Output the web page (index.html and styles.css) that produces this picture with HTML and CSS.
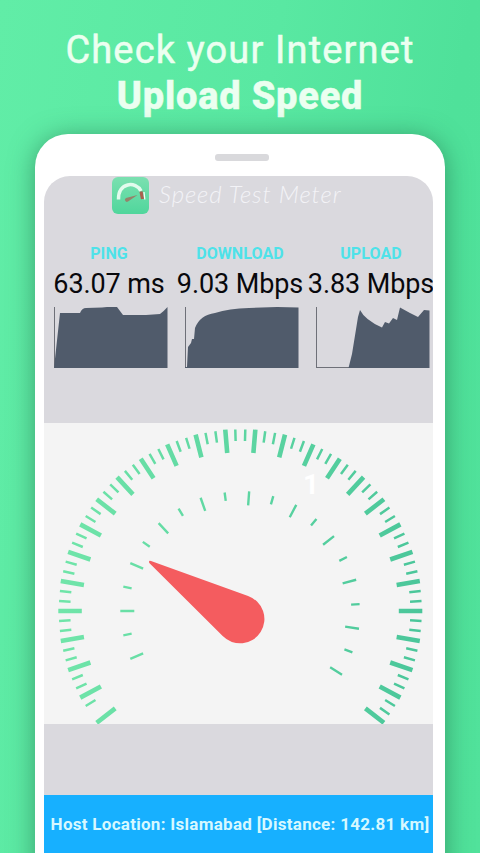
FILE: index.html
```html
<!DOCTYPE html>
<html lang="en">
<head>
<meta charset="utf-8">
<title>Speed Test Meter</title>
<link rel="stylesheet" href="styles.css">
</head>
<body>
<main class="poster">
  <h1 class="headline"><span class="headline-top">Check your Internet</span><strong class="headline-bottom">Upload Speed</strong></h1>
  <div class="phone">
    <div class="speaker"></div>
    <div class="screen">
      <header class="brand">
        <svg class="brand-icon" viewBox="0 0 37 37" width="37" height="37">
          <defs><linearGradient id="tile" x1="0" y1="0" x2="0" y2="1"><stop offset="0" stop-color="#7be0b0"/><stop offset="1" stop-color="#50d69c"/></linearGradient></defs>
          <rect width="37" height="37" rx="6" fill="url(#tile)"/>
          <path d="M6.500 22.500C6 5 24 4 29 14" fill="none" stroke="#e2fbed" stroke-width="3.500"/>
          <path d="M29 14.500L30.500 22" stroke="#a9604f" stroke-width="3.200"/>
          <path d="M32 15L32.800 22.500" stroke="#f3fff8" stroke-width="1.300"/>
          <path d="M25.500 18L14 21a2 2 0 0 0 2 3.600z" fill="#95836b"/>
        </svg>
        <span class="brand-name">Speed Test Meter</span>
      </header>
      <section class="stats">
        <div class="stat">
          <span class="label">PING</span><span class="value">63.07 ms</span>
          <svg class="chart" viewBox="0 0 116 64" width="116" height="64"><path class="axis" d="M2.500 3V64"/><path class="area" d="M2 64L8 9H28Q30 4 34 4L50 3.500L55 3H65L71 11L94 11L108 10Q112 7 115.500 3V64Z"/></svg>
        </div>
        <div class="stat">
          <span class="label">DOWNLOAD</span><span class="value">9.03 Mbps</span>
          <svg class="chart" viewBox="0 0 116 64" width="116" height="64"><path class="axis" d="M2.500 3V64"/><path class="area" d="M2 64V63H4L5 43L8 39L9 35H11L12 24Q17 11 32 9Q46 4.500 66 4L94 3L115.500 3.500V64Z"/></svg>
        </div>
        <div class="stat">
          <span class="label">UPLOAD</span><span class="value">3.83 Mbps</span>
          <svg class="chart" viewBox="0 0 116 64" width="116" height="64"><path class="axis" d="M2.500 3V64M2 63.500H36"/><path class="area" d="M34.500 64L38 50L44 13L46 6Q51 16 68 23.500L71 18L75 19.500L79 14L83 16L86 3.500L96 9L104 13L110 6L115.500 6.500V64Z"/></svg>
        </div>
      </section>
      <section class="gauge">
        <svg id="dial" viewBox="44 423 389 301" width="389" height="301">
          <defs><linearGradient id="green" gradientUnits="userSpaceOnUse" x1="60" y1="0" x2="422" y2="0"><stop offset="0" stop-color="#70e5a9"/><stop offset="1" stop-color="#4ac69a"/></linearGradient></defs>
          <path id="major" stroke="url(#green)" stroke-width="4.600"/>
          <path id="minor" stroke="url(#green)" stroke-width="2.500"/>
          <path id="inner" stroke="url(#green)" stroke-width="2.400"/>
          <text class="mark" x="303" y="494">1</text>
          <path d="M151 561L248.100 596.100A24.300 24.300 0 1 1 222.700 636L149.300 563Q148.300 560 151 561Z" fill="#f45c5f"/>
        </svg>
      </section>
      <div class="spacer"></div>
      <footer class="host">Host Location: Islamabad [Distance: 142.81 km]</footer>
    </div>
  </div>
</main>
<script src="gauge.js"></script>
</body>
</html>
```
FILE: styles.css
```css
* { box-sizing: border-box; }
body { margin: 0; font-family: Roboto, "Liberation Sans", sans-serif; }
.poster {
  width: 480px; height: 853px; overflow: hidden;
  display: flex; flex-direction: column; align-items: flex-start;
  background: linear-gradient(100deg, #61eda7 0%, #59e8a2 45%, #4fe19a 75%, #51e29b 100%);
}
.headline {
  margin: 0; width: 480px; height: 134px; flex: none; padding-top: 27px;
  display: flex; flex-direction: column; align-items: center;
  color: #ebfff0; font-size: 38px; line-height: 46px; font-weight: 400; white-space: nowrap;
}
.headline-top { letter-spacing: 1.15px; -webkit-text-stroke: .5px #ebfff0; }
.headline-bottom { font-weight: 800; letter-spacing: 0.8px; -webkit-text-stroke: .5px #ebfff0; }
.phone {
  width: 410px; height: 760px; flex: none; margin-left: 35px; padding: 20px 12px 0 9px;
  background: #fff; border-radius: 33px 33px 0 0; box-shadow: 0 3px 26px rgba(32, 105, 70, .58);
}
.speaker { width: 54px; height: 7px; margin: 0 0 15px 171px; background: #d9d9dc; border-radius: 3px; }
.screen {
  width: 389px; height: 740px; overflow: hidden;
  display: flex; flex-direction: column;
  background: #dad9de; border-radius: 26px 26px 0 0;
}
.brand { height: 67px; flex: none; padding: 1px 0 0 68px; display: flex; align-items: flex-start; gap: 10px; }
.brand-name { font: italic 300 24px/34px Lato, sans-serif; letter-spacing: .95px; color: #f3f3f7; white-space: nowrap; }
.stats { height: 180px; flex: none; padding-left: 7px; display: grid; grid-template-columns: 131px 131px 131px; }
.stat { width: 116px; display: flex; flex-direction: column; align-items: center; white-space: nowrap; }
.label { font-size: 16px; line-height: 22px; font-weight: 700; letter-spacing: .1px; color: #4ee2e9; }
.value { font-size: 27px; line-height: 38px; letter-spacing: -.1px; color: #08080c; }
.chart { margin: 1px -1px 0 1px; }
.area { fill: #505b6b; }
.axis { fill: none; stroke: #6e7078; stroke-width: 1; }
.gauge { height: 301px; flex: none; background: #f4f4f4; }
.gauge svg, .chart, .brand-icon { display: block; flex: none; }
.mark { fill: #fff; font: 700 28px Roboto, sans-serif; }
.spacer { height: 71px; flex: none; }
.host {
  height: 58px; flex: none; display: flex; align-items: center; justify-content: center;
  background: #17b0ff; color: #d6f8ff; font-size: 17px; font-weight: 700; letter-spacing: .28px; white-space: nowrap;
  padding-left: 3px;
}
```
FILE: gauge.js
```js
const cx = 240.3, cy = 611;
function tick(deg, from, to) {
  const a = deg * Math.PI / 180;
  const point = r => `${(cx - r * Math.cos(a)).toFixed(2)} ${(cy - r * Math.sin(a)).toFixed(2)}`;
  return `M${point(from)}L${point(to)}`;
}
let major = "", minor = "", inner = "";
for (let i = -12; i <= 69; i++) {
  if (i === -11) continue;
  const deg = i * 180 / 57;
  if (i % 3 === 0) major += tick(deg, 158.5, 182);
  else minor += tick(deg, 170, 181.5);
}
for (let k = -2; k <= 18; k++) inner += tick(k * 11.78, k % 2 ? 111 : 106, k % 2 ? 119.5 : 120);
document.getElementById("major").setAttribute("d", major);
document.getElementById("minor").setAttribute("d", minor);
document.getElementById("inner").setAttribute("d", inner);
```
